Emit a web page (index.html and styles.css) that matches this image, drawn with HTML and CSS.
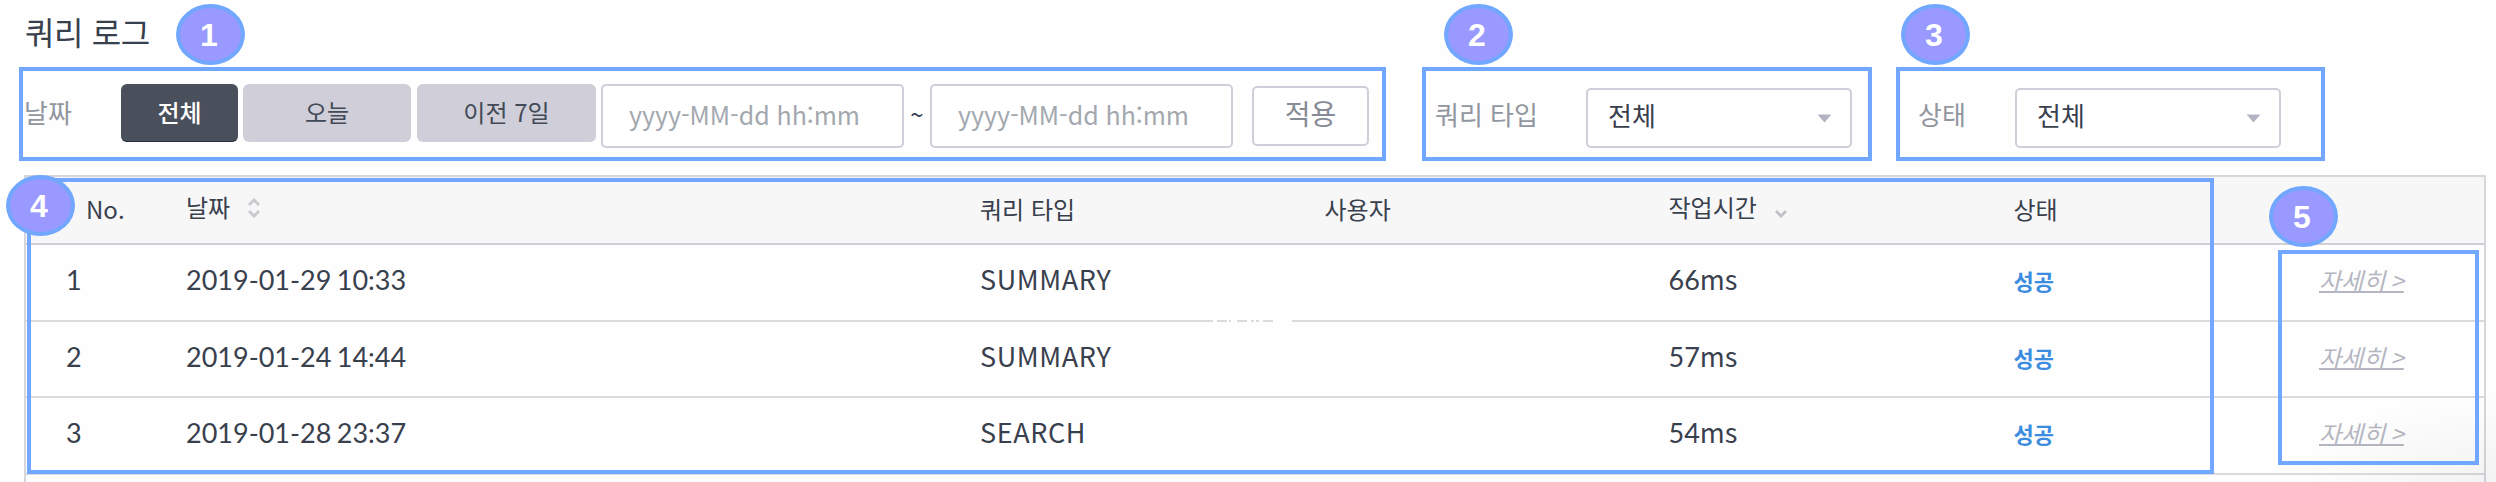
FILE: index.html
```html
<!DOCTYPE html>
<html lang="ko">
<head>
<meta charset="utf-8">
<title>쿼리 로그</title>
<link rel="stylesheet" href="styles.css">
</head>
<body>
<main class="page">
  <h1 class="title">쿼리 로그</h1>

  <section class="filters">
    <span class="label label-date">날짜</span>
    <div class="ranges">
      <button class="range range-all">전체</button>
      <button class="range range-today">오늘</button>
      <button class="range range-week">이전 7일</button>
    </div>
    <div class="date">yyyy-MM-dd hh:mm</div>
    <span class="tilde">~</span>
    <div class="date">yyyy-MM-dd hh:mm</div>
    <button class="apply">적용</button>
    <span class="label label-type">쿼리 타입</span>
    <div class="select">전체<svg class="caret" width="15" height="9" viewBox="0 0 15 9"><path d="M0.5 0.5h14L7.5 8.5z"/></svg></div>
    <span class="label label-status">상태</span>
    <div class="select">전체<svg class="caret" width="15" height="9" viewBox="0 0 15 9"><path d="M0.5 0.5h14L7.5 8.5z"/></svg></div>
  </section>

  <section class="table">
    <div class="row head">
      <span class="cell head-no">No.</span>
      <span class="cell raised">날짜<svg class="sort" width="14" height="20" viewBox="0 0 14 20"><path d="M2 7l5-5 5 5M2 13l5 5 5-5"/></svg></span>
      <span class="cell">쿼리 타입</span>
      <span class="cell">사용자</span>
      <span class="cell raised">작업시간<svg class="sort sort-desc" width="14" height="20" viewBox="0 0 14 20"><path d="M2 13l5 5 5-5"/></svg></span>
      <span class="cell">상태</span>
      <span class="cell"></span>
    </div>
    <div class="row">
      <span class="cell cell-no"><span class="num">1</span></span>
      <span class="cell"><span class="num">2019-01-29 10:33</span></span>
      <span class="cell type">SUMMARY</span>
      <span class="cell"></span>
      <span class="cell"><span class="num">66</span>ms</span>
      <span class="cell"><span class="ok">성공</span></span>
      <span class="cell"><a class="detail">자세히 &gt;</a></span>
    </div>
    <div class="row">
      <span class="cell cell-no"><span class="num">2</span></span>
      <span class="cell"><span class="num">2019-01-24 14:44</span></span>
      <span class="cell type">SUMMARY</span>
      <span class="cell"></span>
      <span class="cell"><span class="num">57</span>ms</span>
      <span class="cell"><span class="ok">성공</span></span>
      <span class="cell"><a class="detail">자세히 &gt;</a></span>
    </div>
    <div class="row">
      <span class="cell cell-no"><span class="num">3</span></span>
      <span class="cell"><span class="num">2019-01-28 23:37</span></span>
      <span class="cell type">SEARCH</span>
      <span class="cell"></span>
      <span class="cell"><span class="num">54</span>ms</span>
      <span class="cell"><span class="ok">성공</span></span>
      <span class="cell"><a class="detail">자세히 &gt;</a></span>
    </div>
    <div class="rest"></div>
  </section>

  <!-- breaks in the first row divider -->
  <svg class="gaps" width="80" height="4" viewBox="0 0 80 4"><path d="M0 0h4v4H0zM14 0h2v4h-2zM18 0h6v4h-6zM34 0h4v4h-4zM41 0h2v4h-2zM46 0h4v4h-4zM60 0h19v4H60z"/></svg>
  <div class="corner-shade"></div>

  <div class="mark mark-1"></div>
  <div class="mark mark-2"></div>
  <div class="mark mark-3"></div>
  <div class="mark mark-4"></div>
  <div class="mark mark-5"></div>
  <div class="badge badge-1">1</div>
  <div class="badge badge-2">2</div>
  <div class="badge badge-3">3</div>
  <div class="badge badge-4">4</div>
  <div class="badge badge-5">5</div>
</main>
</body>
</html>
```
FILE: styles.css
```css
* { box-sizing: border-box; }

body {
  margin: 0;
  background: #fefefe;
  color: #39404d;
  font-family: "Noto Sans CJK KR", sans-serif;
}

.page {
  position: relative;
  width: 2496px;
  height: 482px;
  overflow: hidden;
}

.title {
  height: 60px;
  margin: 0;
  padding: 1px 0 0 25px;
  font-size: 32px;
  font-weight: 400;
  line-height: 60px;
  letter-spacing: -0.4px;
}

/* Filter bar */
.filters {
  display: flex;
  align-items: flex-start;
  height: 115px;
  padding: 24px 0 0 24px;
  white-space: nowrap;
}

button {
  font: inherit;
  margin: 0;
  padding: 0;
  border: 0;
}

.label {
  flex: none;
  color: #92969f;
  font-size: 26px;
  line-height: 60px;
}
.label-date { width: 97px; margin-top: -2px; }
.label-type { width: 151px; margin-left: 66px; }
.label-status { width: 97px; margin-left: 66px; }

.ranges { display: flex; flex: none; }

.range {
  height: 58px;
  padding-bottom: 3px;
  border-radius: 6px;
  background: #cfced9;
  color: #424a57;
  font-size: 24px;
  line-height: 55px;
}
.range-all {
  width: 117px;
  background: #4a505b;
  color: #fff;
  font-weight: 500;
  border-bottom: 1px solid #262f3e;
}
.range-today { width: 168px; margin-left: 5px; }
.range-week { width: 179px; margin-left: 6px; }

.date {
  flex: none;
  width: 303px;
  height: 64px;
  padding-left: 26px;
  border: 2px solid #cfced9;
  border-radius: 5px;
  background: #fff;
  color: #a3a8af;
  font-size: 25px;
  line-height: 57px;
  letter-spacing: -0.05px;
}
.ranges + .date { margin-left: 5px; }

.tilde {
  width: 26px;
  font-size: 24px;
  line-height: 59px;
  text-align: center;
}

.apply {
  width: 117px;
  height: 60px;
  margin: 2px 0 0 19px;
  padding-bottom: 5px;
  border: 2px solid #cfced9;
  border-radius: 5px;
  background: #fff;
  color: #868b95;
  font-size: 28px;
  line-height: 51px;
}

.select {
  display: flex;
  flex: none;
  justify-content: space-between;
  width: 266px;
  height: 60px;
  margin-top: 4px;
  padding: 0 18px 0 20px;
  border: 2px solid #cfced9;
  border-radius: 5px;
  background: #fff;
  font-size: 26px;
  line-height: 50px;
}
.caret { margin-top: 24px; fill: #b3b4c2; }

/* Log table */
.table {
  width: 2462px;
  height: 307px;
  margin-left: 24px;
  border: 2px solid #d6d6db;
  border-bottom: 0;
  background: #fefefe;
}

.row {
  display: grid;
  grid-template-columns: 160px 794px 344.5px 344px 345px 305.5px 1fr;
  height: 76.7px;
  border-bottom: 2px solid #dbdbde;
  font-size: 27px;
  line-height: 68px;
  white-space: nowrap;
}
.cell-no { padding-left: 40px; }
.num {
  font-family: Lato, sans-serif;
  line-height: 1;
  word-spacing: -1.5px;
}
.type { letter-spacing: 0.6px; }
.ok {
  color: #3c8ce0;
  font-size: 22px;
  font-weight: 700;
  line-height: 1;
}
.detail {
  color: #b5b6c1;
  font-size: 24px;
  font-style: italic;
  line-height: 1;
  word-spacing: -1.5px;
  text-decoration: underline;
  text-decoration-thickness: 1.5px;
  text-underline-offset: 1px;
  text-decoration-skip-ink: none;
}

.head {
  height: 68px;
  border-color: #cfcfd6;
  background: #f7f7f8;
  font-size: 24px;
  line-height: 63px;
}
.head-no { padding-left: 60px; }
.raised { display: flex; line-height: 59px; }
.sort {
  margin: 21px 0 0 17px;
  fill: none;
  stroke: #c9c9d0;
  stroke-width: 2.8;
}
.sort-desc { stroke: #bfc0c9; }
.rest { height: 7px; }

.gaps {
  position: absolute;
  left: 1213px;
  top: 319px;
  fill: #fefefe;
}

.corner-shade {
  position: absolute;
  right: 0;
  bottom: 0;
  width: 200px;
  height: 90px;
  background: radial-gradient(200px 90px at 100% 100%, rgba(60, 60, 70, 0.06), rgba(60, 60, 70, 0));
}

/* Numbered callouts over the screen */
.mark {
  position: absolute;
  border: 4px solid #72a7ff;
}
.mark-1 { left: 19px; top: 67px; width: 1367px; height: 94px; }
.mark-2 { left: 1422px; top: 67px; width: 450px; height: 94px; }
.mark-3 { left: 1896px; top: 67px; width: 429px; height: 94px; }
.mark-4 { left: 27px; top: 178px; width: 2187px; height: 296px; }
.mark-5 { left: 2278px; top: 250px; width: 201px; height: 215px; }

.badge {
  position: absolute;
  width: 69px;
  height: 61px;
  padding-right: 3px;
  border: 4px solid #72a7ff;
  border-radius: 50%;
  background: #9999ff;
  color: #fff;
  font: bold 32px/54px "Liberation Sans", Arial, sans-serif;
  text-align: center;
}
.badge-1 { left: 176px; top: 4px; }
.badge-2 { left: 1444px; top: 4px; }
.badge-3 { left: 1901px; top: 4px; }
.badge-4 { left: 6px; top: 175px; }
.badge-5 { left: 2269px; top: 186px; }
```
